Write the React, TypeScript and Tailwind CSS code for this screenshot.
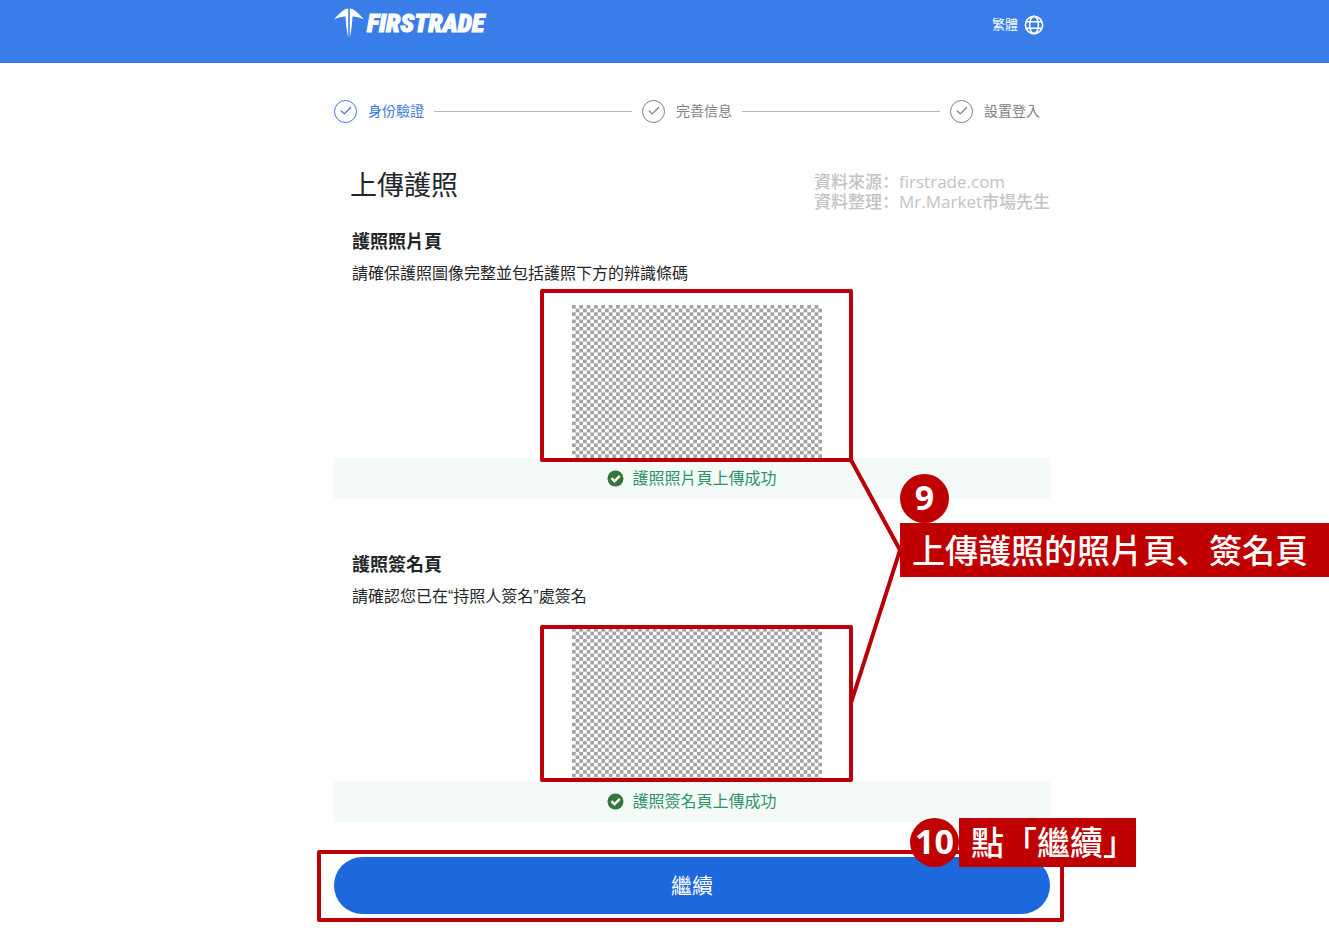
import React from 'react';
import { Check } from 'lucide-react';

const steps = [
  { label: '身份驗證', active: true },
  { label: '完善信息', active: false },
  { label: '設置登入', active: false },
];

const uploads = [
  {
    id: 'photo-page',
    title: '護照照片頁',
    hint: '請確保護照圖像完整並包括護照下方的辨識條碼',
    status: '護照照片頁上傳成功',
    frame: '-top-4 -bottom-1',
  },
  {
    id: 'signature-page',
    title: '護照簽名頁',
    hint: '請確認您已在“持照人簽名”處簽名',
    status: '護照簽名頁上傳成功',
    frame: '-top-[3px] -bottom-px',
  },
];

const Logo = () => (
  <a href="#" aria-label="Firstrade" className="flex items-center gap-[3px] text-white">
    <svg viewBox="0 0 30 30" className="w-[30px] h-[30px]" fill="currentColor" aria-hidden="true">
      <path d="M14.2 0.6 L11.4 1 C7.6 3.4 3.6 7 0 11.4 C3.5 9.8 7 9 10 8.6 L11.6 8.4 C11.6 14 12.4 21 14.2 29.4 Z" />
      <path d="M15.8 0.6 L18.6 1 C22.4 3.4 26.4 7 30 11.4 C26.5 9.8 23 9 20 8.6 L18.4 8.4 C18.4 14 17.6 21 15.8 29.4 Z" />
    </svg>
    <span className="font-['Roboto_Condensed','Roboto',sans-serif] text-[26px] leading-8 font-black italic [-webkit-text-stroke:1px_white]">
      FIRSTRADE
    </span>
  </a>
);

const GlobeIcon = () => (
  <svg viewBox="0 0 20 20" className="w-5 h-5" fill="none" stroke="currentColor" strokeWidth="1.6" aria-hidden="true">
    <circle cx="10" cy="10" r="8.6" />
    <ellipse cx="10" cy="10" rx="4.4" ry="8.6" />
    <path d="M2.2 6.8 H17.8 M2.2 13.2 H17.8" />
  </svg>
);

const SuccessIcon = () => (
  <svg viewBox="0 0 17 17" className="w-[17px] h-[17px]" aria-hidden="true">
    <circle cx="8.5" cy="8.5" r="8" fill="#34763a" />
    <path d="M4.4 8.2 L7.5 11.2 L12.8 5.9" fill="none" stroke="#fff" strokeWidth="2.4" />
  </svg>
);

const Stepper = () => (
  <ol className="flex items-center gap-[10px] pr-[10px]">
    {steps.map((step, idx) => (
      <React.Fragment key={step.label}>
        {idx > 0 && <li aria-hidden="true" className="flex-1 h-px bg-[#b5b8bb]" />}
        <li className={`flex items-center gap-[11px] h-6 text-sm ${step.active ? 'text-[#3a7ae0]' : 'text-[#7d7f83]'}`}>
          <span className="w-[23px] h-[23px] rounded-full border border-current flex items-center justify-center">
            <Check className="w-3.5 h-3.5" strokeWidth={2.2} />
          </span>
          {step.label}
        </li>
      </React.Fragment>
    ))}
  </ol>
);

// Placeholder checkerboard shown instead of the uploaded scan
const MaskedScan = ({ id }: { id: string }) => (
  <svg viewBox="0 0 68 42" preserveAspectRatio="none" className="block w-full h-full" role="img" aria-label="護照">
    <defs>
      <pattern id={id} width="2" height="2" patternUnits="userSpaceOnUse">
        <rect width="1" height="1" fill="#a3a3a3" />
        <rect x="1" y="1" width="1" height="1" fill="#a3a3a3" />
      </pattern>
    </defs>
    <rect width="68" height="42" fill={`url(#${id})`} />
  </svg>
);

const Badge = ({ children }: { children: React.ReactNode }) => (
  <span className="w-[49px] h-[49px] pb-1 shrink-0 rounded-full bg-[#c00000] flex items-center justify-center font-['Noto_Sans'] text-[34px] leading-none font-bold">
    {children}
  </span>
);

// Punctuation that sits in the lower left corner of its cell
const Mark = ({ children }: { children: React.ReactNode }) => (
  <span className="font-['Noto_Sans_CJK_SC',sans-serif]">{children}</span>
);

export default function App() {
  return (
    <div className="min-h-screen bg-white text-[#22262a] font-['Liberation_Sans','Noto_Sans_CJK_TC',sans-serif] overflow-x-hidden pb-6">
      <header className="bg-[#387de8] h-[63px] pl-[55px]">
        <div className="max-w-[716px] mx-auto flex items-center justify-between pt-[7px] pr-1.5">
          <Logo />
          <button type="button" className="flex items-center gap-1.5 pt-1 text-[13px] text-white">
            繁體
            <GlobeIcon />
          </button>
        </div>
      </header>

      <main className="pl-[55px]">
        <div className="max-w-[716px] mx-auto pt-9">
          <Stepper />

          <div className="mt-[43px] flex items-start justify-between">
            <h1 className="pl-4 text-[27px] leading-10">上傳護照</h1>
            <div className="pt-[5px] font-['Open_Sans','Noto_Sans_CJK_TC',sans-serif] text-[17px] leading-5 font-medium text-[#c3c3c3]">
              <p className="h-5">資料來源<Mark>：</Mark>firstrade.com</p>
              <p className="h-5">資料整理<Mark>：</Mark>Mr.Market市場先生</p>
            </div>
          </div>

          <div className="relative mt-[17px] flex flex-col gap-[52px]">
            {uploads.map((item) => (
              <section key={item.id}>
                <h2 className="pl-[18px] text-lg leading-7 font-bold">{item.title}</h2>
                <p className="pl-[18px] mt-1.5 text-base leading-6">{item.hint}</p>
                <div className="relative mt-[19px] ml-[238px] w-[250px] h-[153px]">
                  <MaskedScan id={item.id} />
                  <div className={`absolute ${item.frame} -left-8 -right-[31px] z-10 rounded-xs border-4 border-[#b90006]`} />
                </div>
                <p className="h-[41px] bg-[#f3faf8] flex items-center justify-center gap-2 text-base text-[#2e9468]">
                  <SuccessIcon />
                  {item.status}
                </p>
              </section>
            ))}

            <svg viewBox="0 0 48 242" className="absolute left-[518px] top-[233px] w-12 h-[242px] overflow-visible" fill="none" stroke="#b90006" strokeWidth="4" aria-hidden="true">
              <path d="M-1 -1 L48 89 L-1 242" />
            </svg>
            <div className="absolute left-[566px] top-[246px] text-white">
              <Badge>9</Badge>
              <div className="h-[54px] pl-3 pr-[21px] bg-[#c00000] flex items-center whitespace-nowrap text-[33px] leading-none font-medium">
                <p>上傳護照的照片頁<Mark>、</Mark>簽名頁</p>
              </div>
            </div>
          </div>

          <div className="relative mt-[35px]">
            <button type="button" className="block w-full h-[57px] rounded-full bg-[#1c68dc] text-[21px] text-white">
              繼續
            </button>
            <div className="absolute -left-[17px] -right-[14px] -top-[7px] -bottom-2 rounded-xs border-4 border-[#b90006] pointer-events-none" />
            <div className="absolute left-[576px] -top-[39px] flex text-white">
              <Badge>10</Badge>
              <div className="h-[49px] pl-3 pt-0.5 bg-[#c00000] flex items-center whitespace-nowrap text-[33px] leading-none font-medium">
                點「繼續」
              </div>
            </div>
          </div>
        </div>
      </main>
    </div>
  );
}
